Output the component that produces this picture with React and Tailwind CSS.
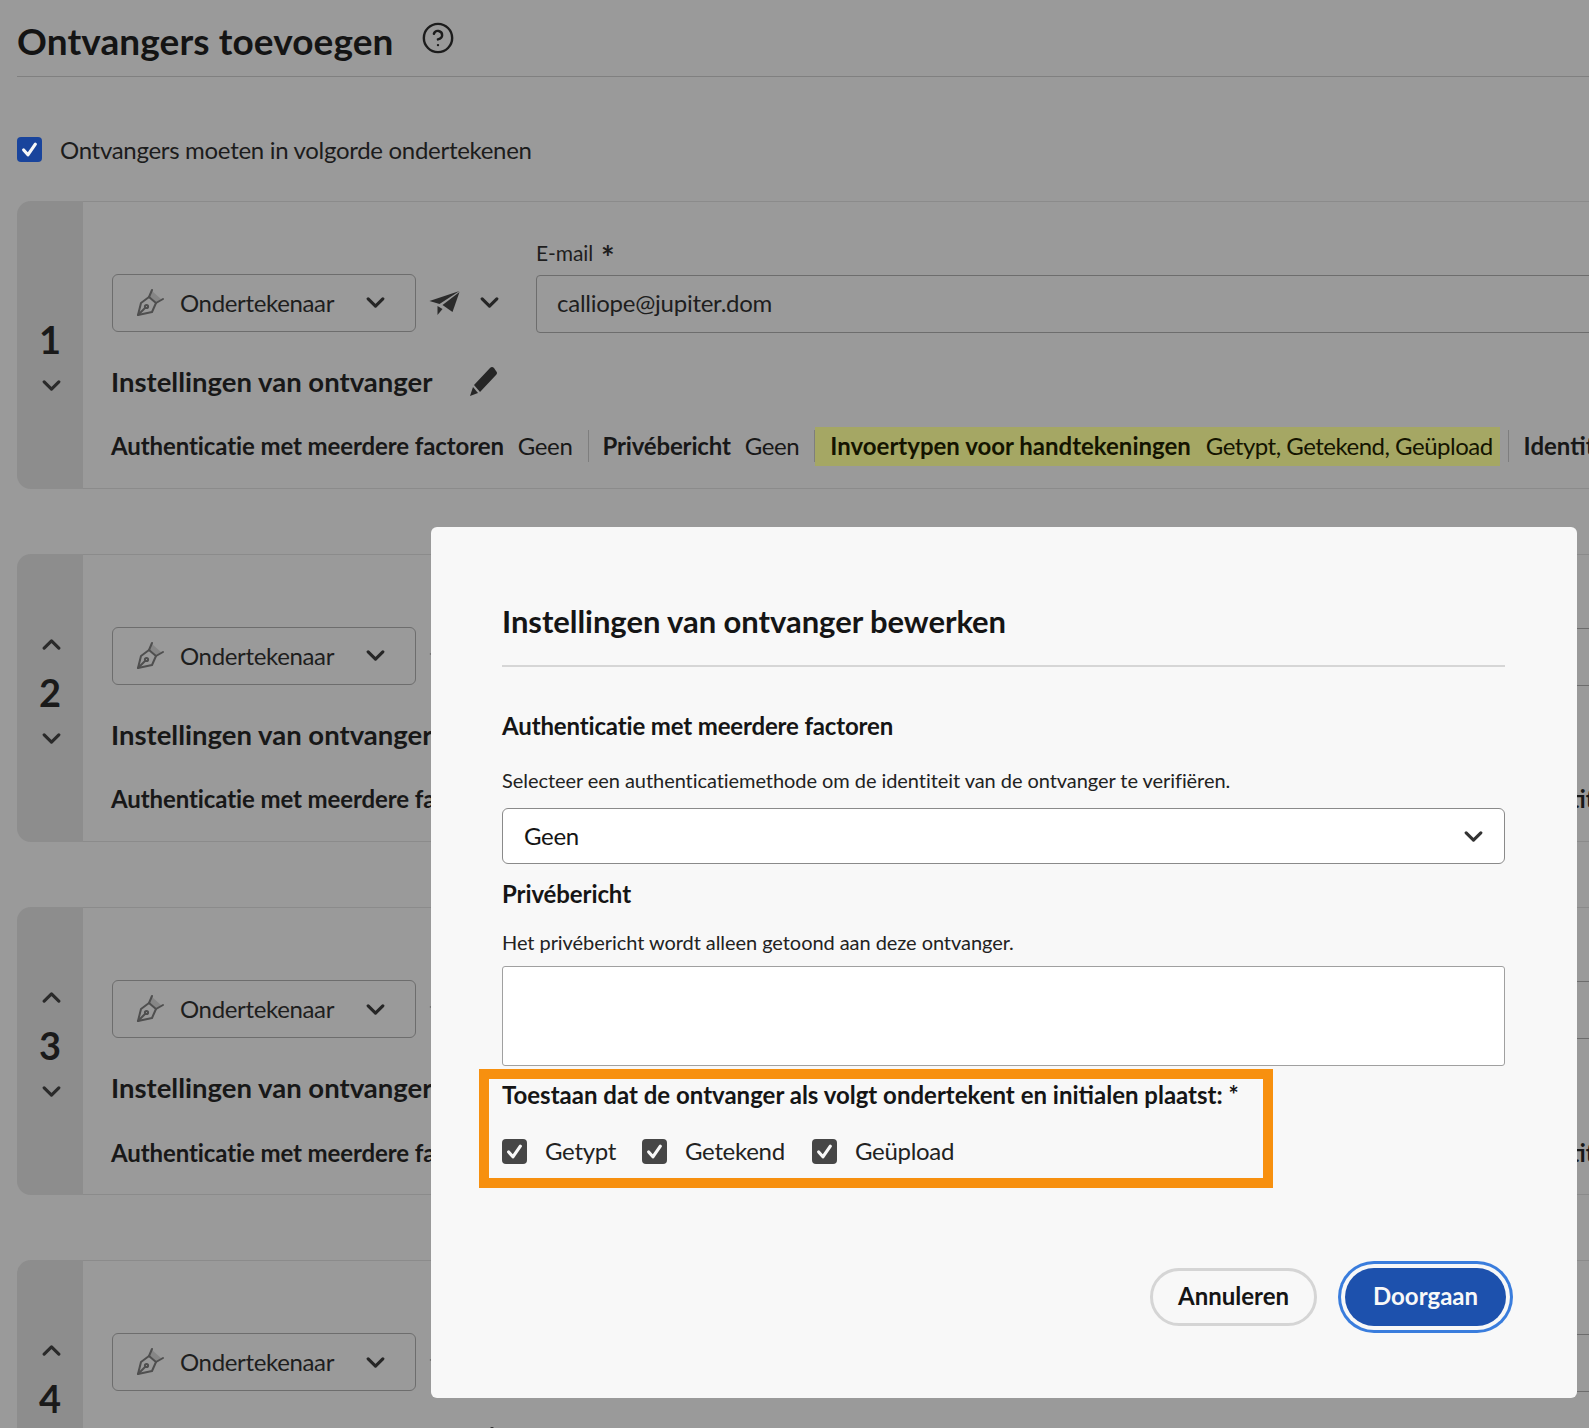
import React from "react";
import { CircleHelp } from "lucide-react";

const Chevron = ({ up, className = "" }) => (
  <svg viewBox="0 0 20 12" className={`w-[19px] h-[11px] ${className}`} fill="none" stroke="currentColor" strokeWidth="3.4" strokeLinecap="round" strokeLinejoin="round">
    <path d={up ? "M2 10 L10 2 L18 10" : "M2 2 L10 10 L18 2"} />
  </svg>
);

const PenNib = () => (
  <svg viewBox="0 0 30 30" className="w-[30px] h-[30px] shrink-0" fill="none" stroke="#4f4f4f" strokeWidth="2" strokeLinejoin="round" strokeLinecap="round">
    <path d="M17 3 L26 11 L22 15 L14 8 Z" fill="#868686" stroke="none" />
    <path d="M3 27 L6 15 L14 9 L21 15 L17 24 Z" />
    <path d="M3 27 L10 20" />
    <path d="M14 9 L17 2" />
    <path d="M21 15 L28 11" />
    <circle cx="11.5" cy="18.5" r="1.6" />
  </svg>
);

const Plane = () => (
  <svg viewBox="0 0 30 26" className="w-[31px] h-[26px] shrink-0" fill="#2b2b2b">
    <path d="M0 11 L30 1 L10 14 Z" />
    <path d="M13 15 L30 2 L23 22 Z" />
    <path d="M8 16 L13 19 L8 25 Z" />
  </svg>
);

const Pencil = () => (
  <svg viewBox="0 0 30 31" className="w-[30px] h-[31px] shrink-0">
    <path d="M6 19 L22 2 Q24 0 26 2 L28 5 Q30 7 28 9 L12 26 Z" fill="#262626" />
    <path d="M5 21 L10 27 L2 30 Z" fill="#262626" />
  </svg>
);

const Check = ({ bg, size = "w-[25px] h-[25px]" }) => (
  <span className={`${size} ${bg} rounded-[4px] flex items-center justify-center shrink-0`}>
    <svg viewBox="0 0 16 16" className="w-[17px] h-[17px]" fill="none" stroke="#f8f8f8" strokeWidth="3" strokeLinecap="round" strokeLinejoin="round">
      <path d="M2.5 8.5 L6.5 13 L13.5 3" />
    </svg>
  </span>
);

function RecipientCard({ nr, first }) {
  return (
    <div className="flex h-[288px] w-[1700px] shrink-0">
      <div className="w-[66px] bg-[#8d8d8d] rounded-l-[14px] flex flex-col items-center text-[#1a1a1a] shrink-0">
        <div className="h-[91px] pt-[85px] pl-[2px]">
          {!first && <Chevron up className="text-[#2a2a2a]" />}
        </div>
        <div className="h-[46px] mt-[24px] text-[38px] leading-[46px] font-bold">{nr}</div>
        <div className="pt-[18px] pl-[2px]">
          <Chevron className="text-[#2a2a2a]" />
        </div>
      </div>

      <div className="flex-1 border-y border-[#8b8b8b] pl-[28px] text-[#181818]">
        <div className="flex items-start mt-[31px]">
          <div className="mt-[41px] ml-[1px] w-[304px] h-[58px] border border-[#6d6d6d] rounded-[6px] flex items-center pl-[22px] pr-[30px] shrink-0">
            <PenNib />
            <span className="ml-[15px] text-[24px] tracking-[-0.35px] text-[#1e1e1e]">Ondertekenaar</span>
            <span className="ml-auto"><Chevron className="text-[#262626]" /></span>
          </div>
          <div className="mt-[41px] h-[58px] flex items-center ml-[13px] shrink-0">
            <Plane />
            <Chevron className="ml-[20px] text-[#262626]" />
          </div>
          <div className="ml-[37px] w-[1200px]">
            <div className="mt-[4px] h-[32px] leading-[32px] text-[21px] text-[#1e1e1e] flex items-center tracking-[-0.1px]">
              E-mail <span className="ml-[8px] text-[32px] font-bold leading-none mt-[10px]">*</span>
            </div>
            <div className="mt-[6px] h-[58px] border border-[#6d6d6d] rounded-[4px] flex items-center pl-[20px] pb-[2px] text-[24px] tracking-[-0.25px] text-[#1e1e1e]">
              calliope@jupiter.dom
            </div>
          </div>
        </div>
        <div className="flex items-center mt-[31px] h-[36px]">
          <span className="text-[27.5px] font-bold whitespace-nowrap">Instellingen van ontvanger</span>
          <span className="ml-[35px]"><Pencil /></span>
        </div>
        <div className="flex items-center mt-[27px] h-[39px] text-[24px] whitespace-nowrap">
          <b className="font-bold tracking-[-0.1px]">Authenticatie met meerdere factoren</b>
          <span className="ml-[14px] tracking-[-0.4px]">Geen</span>
          <span className="ml-[16px] w-[1px] h-[32px] bg-[#7e7e7e]" />
          <b className="ml-[13px] font-bold tracking-[-0.15px]">Privébericht</b>
          <span className="ml-[14px] tracking-[-0.4px]">Geen</span>
          <span className="ml-[15px] w-[1px] h-[32px] bg-[#7e7e7e]" />
          <div className="bg-[#a5a764] h-[39px] flex items-center pl-[15px] pr-[7px] text-[#141400]">
            <b className="font-bold">Invoertypen voor handtekeningen</b>
            <span className="ml-[15px] tracking-[-0.5px]">Getypt, Getekend, Geüpload</span>
          </div>
          <span className="ml-[8px] w-[1px] h-[32px] bg-[#7e7e7e]" />
          <b className="ml-[15px] font-bold">Identiteit</b>
        </div>
      </div>
    </div>
  );
}

function EditDialog() {
  return (
    <div className="absolute left-[431px] top-[527px] w-[1146px] h-[871px] bg-[#f8f8f8] rounded-[6px] pl-[71px] pr-[72px] pt-[74px] text-[#151515]">
      <h2 className="h-[40px] leading-[40px] text-[31px] font-bold tracking-[-0.05px]">Instellingen van ontvanger bewerken</h2>
      <div className="mt-[24px] border-t-2 border-[#d6d6d6]" />

      <h3 className="mt-[43px] h-[32px] leading-[32px] text-[24px] font-bold tracking-[-0.15px]">Authenticatie met meerdere factoren</h3>
      <p className="mt-[24px] h-[28px] leading-[28px] text-[20px] tracking-[-0.06px] text-[#222]">Selecteer een authenticatiemethode om de identiteit van de ontvanger te verifiëren.</p>
      <div className="mt-[14px] h-[56px] bg-white border border-[#8a8a8a] rounded-[6px] flex items-center pl-[21px] pr-[21px] text-[24px] tracking-[-0.3px]">
        Geen
        <Chevron className="ml-auto text-[#333]" />
      </div>

      <h3 className="mt-[14px] h-[32px] leading-[32px] text-[24px] font-bold tracking-[-0.1px]">Privébericht</h3>
      <p className="mt-[18px] h-[28px] leading-[28px] text-[20px] tracking-[-0.06px] text-[#222]">Het privébericht wordt alleen getoond aan deze ontvanger.</p>
      <div className="mt-[10px] h-[100px] bg-white border border-[#a0a0a0] rounded-[3px]" />

      <div className="mt-[3px] -ml-[23px] w-[794px] h-[119px] border-[10px] border-[#f7900f] pl-[13px]">
        <div className="h-[32px] leading-[32px] text-[24px] font-bold">Toestaan dat de ontvanger als volgt ondertekent en initialen plaatst: *</div>
        <div className="flex items-center mt-[22px] text-[24px] tracking-[-0.3px] text-[#222]">
          <Check bg="bg-[#464646]" />
          <span className="ml-[18px] w-[70px]">Getypt</span>
          <span className="ml-[27px]"><Check bg="bg-[#464646]" /></span>
          <span className="ml-[18px] w-[98px]">Getekend</span>
          <span className="ml-[29px]"><Check bg="bg-[#464646]" /></span>
          <span className="ml-[18px]">Geüpload</span>
        </div>
      </div>

      <div className="mt-[80px] -mr-[1px] flex justify-end gap-[28px] text-[24px] font-bold">
        <button className="w-[167px] h-[58px] pb-[2px] rounded-full border-[3px] border-[#d5d5d5]">Annuleren</button>
        <button className="w-[161px] h-[58px] pb-[2px] rounded-full bg-[#1d51ad] text-[#f8f8f8] shadow-[0_0_0_4px_#f8f8f8,0_0_0_7px_#3a7ddd]">Doorgaan</button>
      </div>
    </div>
  );
}

export default function App() {
  return (
    <div className="relative h-[1428px] overflow-hidden bg-[#9a9a9a] pl-[17px] font-['Lato',sans-serif]">
      <div className="flex items-center h-[77px] border-b border-[#808080] -mb-[1px]">
        <h1 className="text-[37px] font-bold text-[#141414] pt-[6px] tracking-[0.1px]">Ontvangers toevoegen</h1>
        <CircleHelp className="ml-[27px] -mt-[1px] w-[34px] h-[34px] text-[#1c1c1c]" strokeWidth={1.7} />
      </div>

      <div className="flex items-center mt-[61px] h-[25px]">
        <Check bg="bg-[#19449c]" />
        <span className="ml-[18px] text-[24px] tracking-[-0.3px] text-[#1c1c1c]">Ontvangers moeten in volgorde ondertekenen</span>
      </div>

      <div className="mt-[38.5px] flex flex-col gap-[65.3px]">
        <RecipientCard nr="1" first />
        <RecipientCard nr="2" />
        <RecipientCard nr="3" />
        <RecipientCard nr="4" />
      </div>

      <EditDialog />
    </div>
  );
}
